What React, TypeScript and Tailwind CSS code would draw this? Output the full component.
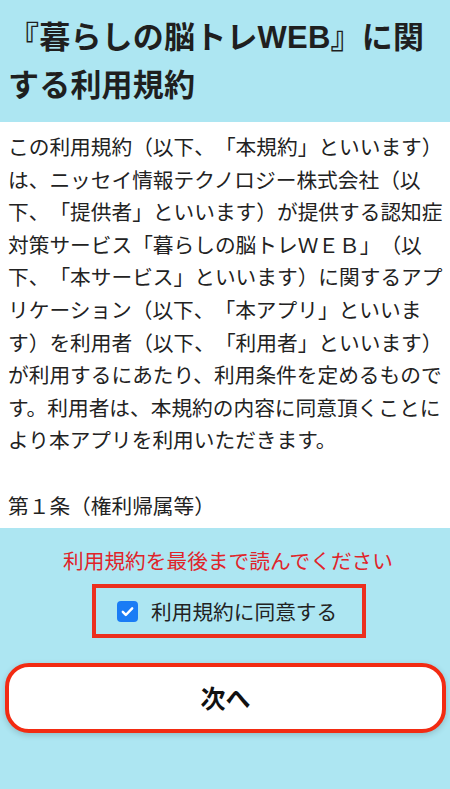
import React from "react";

const bodyLines = [
  "この利用規約（以下、「本規約」といいます）",
  "は、ニッセイ情報テクノロジー株式会社（以",
  "下、「提供者」といいます）が提供する認知症",
  "対策サービス「暮らしの脳トレＷＥＢ」（以",
  "下、「本サービス」といいます）に関するアプ",
  "リケーション（以下、「本アプリ」といいま",
  "す）を利用者（以下、「利用者」といいます）",
  "が利用するにあたり、利用条件を定めるもので",
  "す。利用者は、本規約の内容に同意頂くことに",
  "より本アプリを利用いただきます。",
  "",
  "第１条（権利帰属等）",
];

const CheckIcon = () => (
  <span className="flex h-[21px] w-[21px] items-center justify-center rounded-[4px] bg-[#1a7cf5]">
    <svg width="15" height="15" viewBox="0 0 16 16" fill="none">
      <path
        d="M3 8.4l3.2 3.3L13 4.6"
        stroke="white"
        strokeWidth="2.6"
        strokeLinecap="round"
        strokeLinejoin="round"
      />
    </svg>
  </span>
);

export default function App() {
  return (
    <div
      className="flex h-[789px] w-[450px] flex-col overflow-hidden bg-[#ade6f2] text-[#222] [text-spacing-trim:space-all]"
      style={{ fontFamily: '"Liberation Sans", "Noto Sans CJK JP", sans-serif' }}
    >
      <header className="h-[122px] shrink-0 px-[8px] pt-[14px]">
        <h1 className="whitespace-nowrap text-[31px] font-bold leading-[48px] tracking-[0.2px] text-[#1f1f1f]">
          『暮らしの脳トレWEB』に関
          <br />
          する利用規約
        </h1>
      </header>

      <main className="h-[406px] shrink-0 overflow-hidden bg-white px-[8px] pt-[8px]">
        <div
          className="whitespace-nowrap text-[20.7px] leading-[32.6px] text-[#222]"
          style={{ fontFamily: '"Noto Sans CJK JP", sans-serif' }}
        >
          {bodyLines.map((line, i) => (
            <p key={i} className="h-[32.6px]">
              {line}
            </p>
          ))}
        </div>
      </main>

      <footer
        className="flex flex-1 flex-col items-center pt-[17px]"
        style={{ fontFamily: '"Noto Sans CJK JP", sans-serif' }}
      >
        <p className="ml-[6px] text-[20.7px] leading-[30px] text-[#e0242a]">
          利用規約を最後まで読んでください
        </p>
        <label className="mt-[9px] ml-[8px] flex h-[54px] w-[274px] items-center gap-[13px] border-[4px] border-[#ec2f1e] pl-[21px]">
          <CheckIcon />
          <span className="text-[20.7px] leading-[30px] text-[#222]">利用規約に同意する</span>
        </label>
        <button className="mt-[25px] ml-[1px] flex h-[70px] w-[441px] items-center justify-center rounded-[24px] border-[4px] border-[#f22b12] bg-white text-[25px] font-bold text-[#111] shadow-[0_2px_6px_rgba(0,0,0,0.18)]">
          次へ
        </button>
      </footer>
    </div>
  );
}
